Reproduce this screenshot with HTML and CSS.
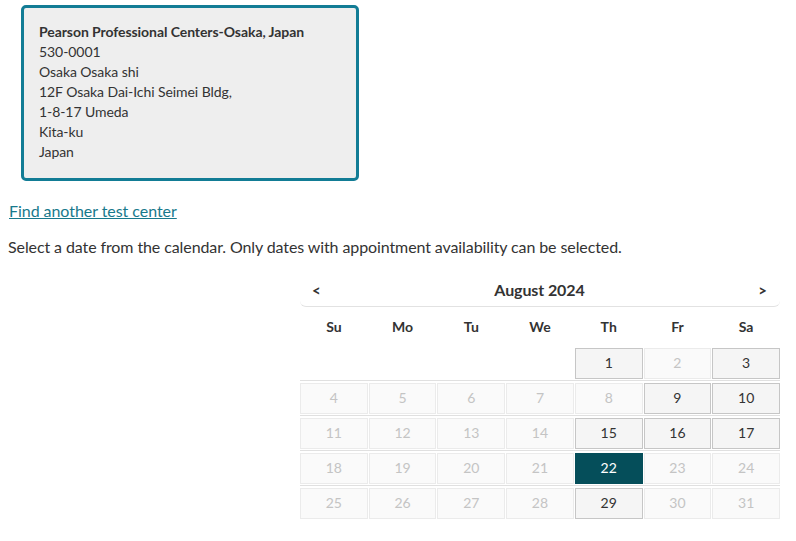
FILE: index.html
```html
<!DOCTYPE html>
<html>
	<head>
		<meta charset="utf-8">
		<title>Select appointment date</title>
		<link rel="stylesheet" href="styles.css">
	</head>
	<body>
		<div class="page">
			<div class="center-box">
				<div class="center-name">Pearson Professional Centers-Osaka, Japan</div>
				<div>530-0001</div>
				<div>Osaka Osaka shi</div>
				<div>12F Osaka Dai-Ichi Seimei Bldg,</div>
				<div>1-8-17 Umeda</div>
				<div>Kita-ku</div>
				<div>Japan</div>
			</div>

			<a class="find-link" href="#">Find another test center</a>

			<p class="intro">Select a date from the calendar. Only dates with appointment availability can be selected.</p>

			<div class="calendar">
				<div class="cal-head">
					<span class="nav">&lt;</span>
					<span class="month">August 2024</span>
					<span class="nav">&gt;</span>
				</div>
				<div class="dow">
					<span>Su</span><span>Mo</span><span>Tu</span><span>We</span><span>Th</span><span>Fr</span><span>Sa</span>
				</div>
				<div class="week">
					<span class="blank"></span><span class="blank"></span><span class="blank"></span><span class="blank"></span>
					<span class="day open">1</span><span class="day">2</span><span class="day open">3</span>
				</div>
				<div class="week">
					<span class="day">4</span><span class="day">5</span><span class="day">6</span><span class="day">7</span>
					<span class="day">8</span><span class="day open">9</span><span class="day open">10</span>
				</div>
				<div class="week">
					<span class="day">11</span><span class="day">12</span><span class="day">13</span><span class="day">14</span>
					<span class="day open">15</span><span class="day open">16</span><span class="day open">17</span>
				</div>
				<div class="week">
					<span class="day">18</span><span class="day">19</span><span class="day">20</span><span class="day">21</span>
					<span class="day selected">22</span><span class="day">23</span><span class="day">24</span>
				</div>
				<div class="week">
					<span class="day">25</span><span class="day">26</span><span class="day">27</span><span class="day">28</span>
					<span class="day open">29</span><span class="day">30</span><span class="day">31</span>
				</div>
			</div>
		</div>
	</body>
</html>
```

FILE: styles.css
```css
body {
	margin: 0;
	background: #ffffff;
	color: #333333;
	font-family: Lato, "Open Sans", sans-serif;
}
.page {
	padding: 5px 8px 0 8px;
}
.center-box {
	width: 302px;
	margin-left: 13px;
	padding: 14px 15px 16px 15px;
	background: #eeeeee;
	border: 3px solid #127c95;
	border-radius: 5px;
	font-size: 14px;
	line-height: 20px;
	letter-spacing: -0.07px;
}
.center-name {
	font-weight: bold;
}
.find-link {
	display: inline-block;
	margin: 20px 0 0 1px;
	color: #18798c;
	font-size: 16px;
	line-height: 20px;
	text-decoration: underline;
	letter-spacing: -0.05px;
}
.intro {
	margin: 16px 0 0 0;
	font-size: 16px;
	line-height: 20px;
	letter-spacing: -0.1px;
}
.calendar {
	width: 480px;
	margin: 16px 0 0 292px;
	font-size: 14px;
}
.cal-head {
	display: flex;
	justify-content: space-between;
	align-items: center;
	height: 33px;
	padding: 0 13px 0 12px;
	border-bottom: 1px solid #e2e2e2;
	border-radius: 0 0 6px 6px;
}
.cal-head .nav {
	font-weight: bold;
	font-size: 15px;
}
.cal-head .month {
	font-weight: bold;
	font-size: 16px;
	letter-spacing: -0.1px;
}
.dow {
	display: grid;
	grid-template-columns: repeat(7, 1fr);
	column-gap: 1px;
	height: 41px;
	line-height: 40px;
	font-weight: bold;
	text-align: center;
}
.week {
	display: grid;
	grid-template-columns: repeat(7, 1fr);
	column-gap: 1px;
}
.week + .week {
	margin-top: 1px;
	padding-top: 2px;
	border-top: 1px solid #e0e0e0;
}
.blank, .day {
	height: 31px;
	box-sizing: border-box;
}
.day {
	line-height: 28px;
	text-align: center;
	background: #fafafa;
	border: 1px solid #ebebeb;
	color: #c4c4c4;
}
.day.open {
	background: #f5f5f5;
	border-color: #c6c6c6;
	color: #333333;
}
.day.selected {
	background: #054e5a;
	border-color: #054e5a;
	color: #ffffff;
}
```
